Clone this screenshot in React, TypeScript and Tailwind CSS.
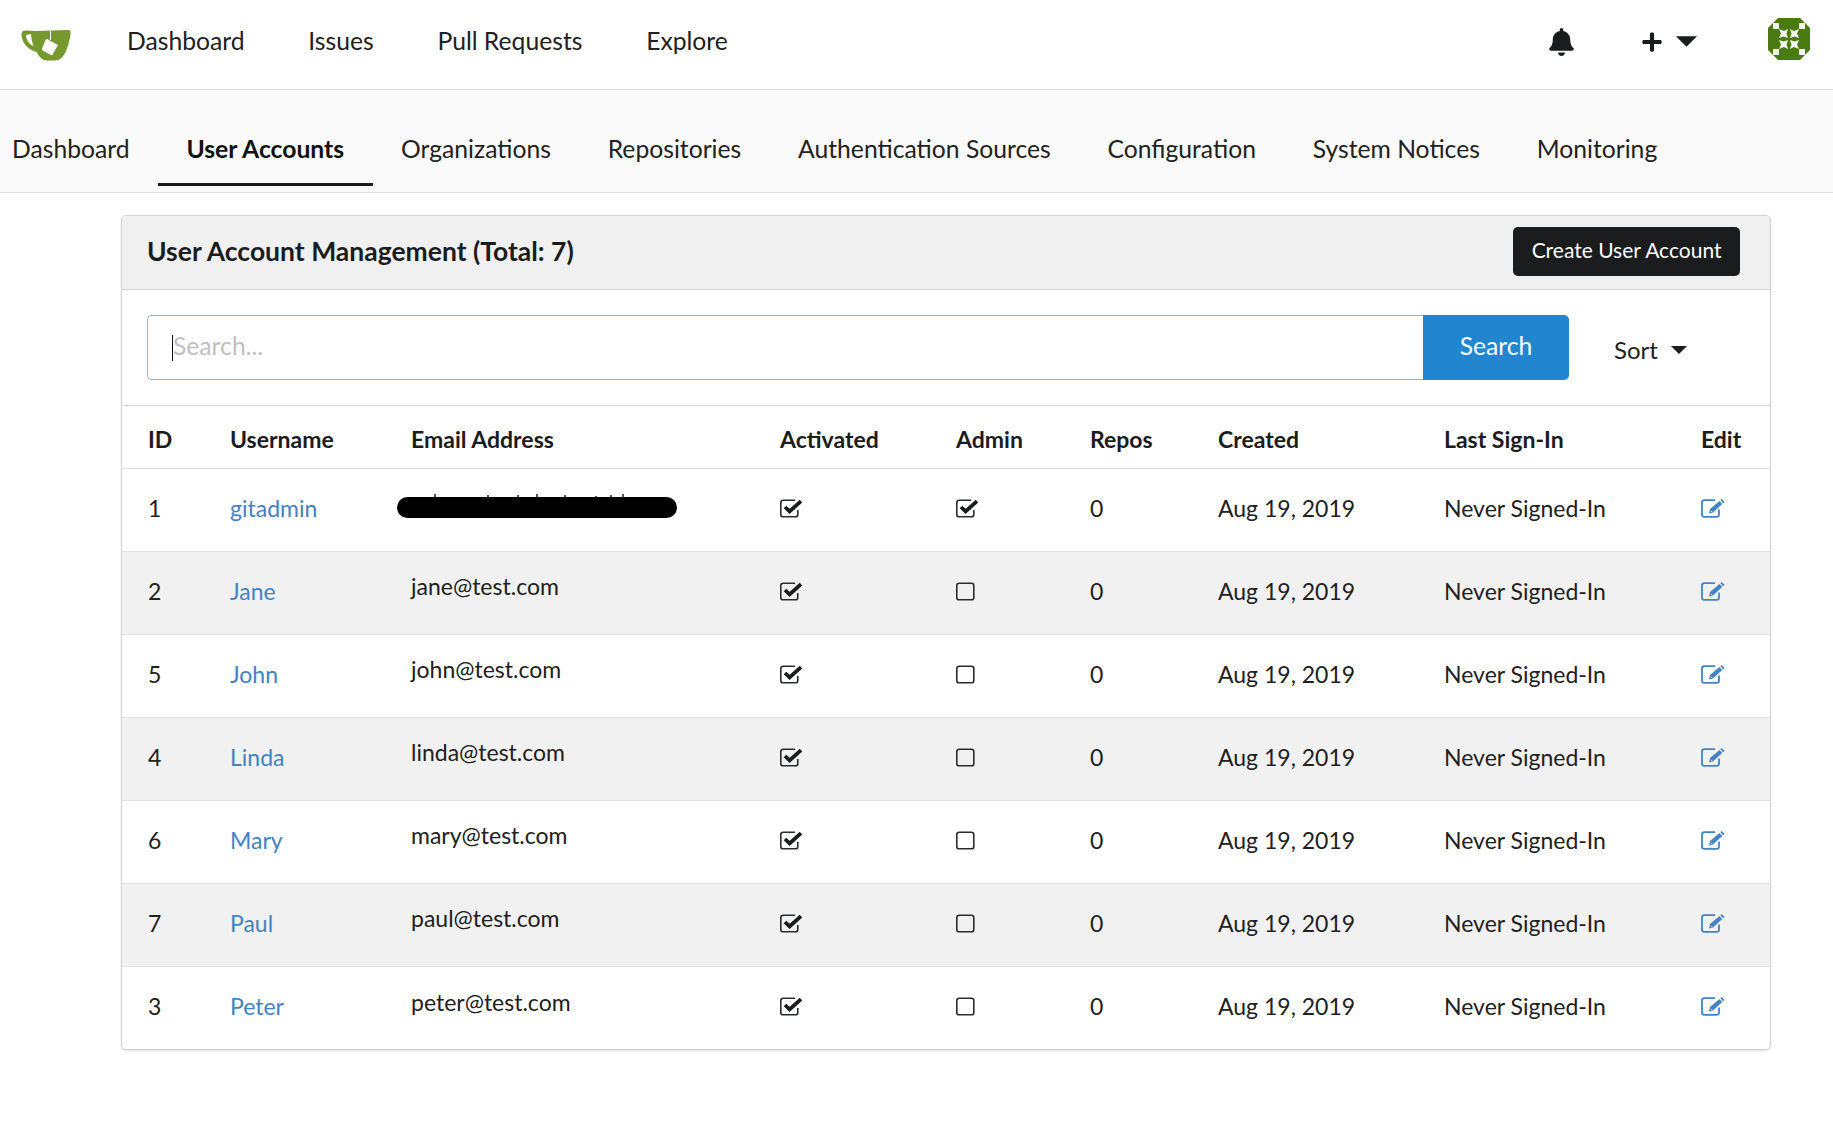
import { FaBell, FaPlus } from "react-icons/fa"

const topLinks = ["Dashboard", "Issues", "Pull Requests", "Explore"]

const tabs = [
    { title: "Dashboard", active: false },
    { title: "User Accounts", active: true },
    { title: "Organizations", active: false },
    { title: "Repositories", active: false },
    { title: "Authentication Sources", active: false },
    { title: "Configuration", active: false },
    { title: "System Notices", active: false },
    { title: "Monitoring", active: false },
]

const users = [
    { id: 1, name: "gitadmin", email: "", admin: true },
    { id: 2, name: "Jane", email: "jane@test.com", admin: false },
    { id: 5, name: "John", email: "john@test.com", admin: false },
    { id: 4, name: "Linda", email: "linda@test.com", admin: false },
    { id: 6, name: "Mary", email: "mary@test.com", admin: false },
    { id: 7, name: "Paul", email: "paul@test.com", admin: false },
    { id: 3, name: "Peter", email: "peter@test.com", admin: false },
]

const headers = [
    { title: "ID", width: "w-[82px]" },
    { title: "Username", width: "w-[181px]" },
    { title: "Email Address", width: "w-[369px]" },
    { title: "Activated", width: "w-[176px]" },
    { title: "Admin", width: "w-[134px]" },
    { title: "Repos", width: "w-[128px]" },
    { title: "Created", width: "w-[226px]" },
    { title: "Last Sign-In", width: "w-[257px]" },
    { title: "Edit", width: "w-[95px]" },
]

function Logo() {
    return (
        <svg viewBox="0 0 50 32" className="h-[32px] w-[50px]">
            <path
                d="M0.5 5 C0.5 2 3 1 6 1.5 L15 2 L47 1 C49.5 1 50 3 49.4 6 C48 14 45.5 24 41 28.5 C39 30.5 36 31.5 33 31.5 L26 31.5 C21.5 31.5 18.5 28 15.5 23 C8 21 0.5 15 0.5 5 Z"
                fill="#76992f"
            />
            <path d="M5 6 L10 5 C10.3 9 11 13 12.5 17 C8 15 5.2 11 5 6 Z" fill="#fff" />
            <path d="M29.5 1.5 L29.5 11" stroke="#fff" strokeWidth="1" />
            <path d="M26 10 L37 16 L31 26.5 L22.5 22 C21 21 20.7 20 21.5 18.5 L24.5 11 C25 10 25.5 9.8 26 10 Z" fill="#fff" />
        </svg>
    )
}

function Avatar() {
    return (
        <svg viewBox="0 0 42 42" className="h-[42px] w-[42px]">
            <path d="M10 0 H32 L42 10 V32 L32 42 H10 L0 32 V10 Z" fill="#4a7a12" />
            <rect x="5" y="5" width="6" height="6" fill="#f2f4ec" />
            <rect x="31" y="5" width="6" height="6" fill="#f2f4ec" />
            <rect x="5" y="31" width="6" height="6" fill="#f2f4ec" />
            <rect x="31" y="31" width="6" height="6" fill="#f2f4ec" />
            <path d="M11 11 L16 13 L20 11 L18.5 15.5 L20 20 L15.5 18.5 L11 20 L13 15.5 Z" fill="#f7f8f2" />
            <path d="M31 11 L26 13 L22 11 L23.5 15.5 L22 20 L26.5 18.5 L31 20 L29 15.5 Z" fill="#f7f8f2" />
            <path d="M11 31 L16 29 L20 31 L18.5 26.5 L20 22 L15.5 23.5 L11 22 L13 26.5 Z" fill="#f7f8f2" />
            <path d="M31 31 L26 29 L22 31 L23.5 26.5 L22 22 L26.5 23.5 L31 22 L29 26.5 Z" fill="#f7f8f2" />
        </svg>
    )
}

function Caret({ className }: { className: string }) {
    return (
        <svg viewBox="0 0 20 10" className={className}>
            <path d="M0 0 H20 L10 10 Z" fill="#1b1c1d" />
        </svg>
    )
}

function CheckBox({ checked }: { checked: boolean }) {
    return (
        <svg viewBox="0 0 23 19" className="block h-[19px] w-[23px]">
            <path
                d={
                    checked
                        ? "M15 1.2 H3.2 A2.4 2.4 0 0 0 0.8 3.6 V15.4 A2.4 2.4 0 0 0 3.2 17.8 H15.4 A2.4 2.4 0 0 0 17.8 15.4 V11"
                        : "M3.2 1.2 H15.4 A2.4 2.4 0 0 1 17.8 3.6 V15.4 A2.4 2.4 0 0 1 15.4 17.8 H3.2 A2.4 2.4 0 0 1 0.8 15.4 V3.6 A2.4 2.4 0 0 1 3.2 1.2 Z"
                }
                fill="none"
                stroke="#2b2c2d"
                strokeWidth="1.6"
            />
            {checked && <path d="M5 8 L9.6 12.4 L21 2.2" fill="none" stroke="#1b1c1d" strokeWidth="3.8" />}
        </svg>
    )
}

function EditIcon() {
    return (
        <svg viewBox="0 0 24 19" className="block h-[19px] w-[24px]">
            <path
                d="M14 1.2 H3.4 A2.4 2.4 0 0 0 1 3.6 V15.4 A2.4 2.4 0 0 0 3.4 17.8 H15.6 A2.4 2.4 0 0 0 18 15.4 V10.5"
                fill="none"
                stroke="#4183c4"
                strokeWidth="1.8"
            />
            <path d="M9 10 L18.5 2 L21.2 5 L12 13.6 L8 14.6 Z" fill="#4183c4" />
            <path d="M19.4 1.2 L20.6 0 L23.6 3 L22.2 4.2 Z" fill="#4183c4" />
            <path d="M10 11.8 L11.2 13" stroke="#fff" strokeWidth="1" />
        </svg>
    )
}

// blacked out address, the tops of the letters still show above the bar
function Redacted() {
    return (
        <svg viewBox="0 0 280 24" className="-ml-[14px] mt-[4px] block h-[24px] w-[280px]">
            <path d="M38 0 V6 M91 1 V6 M121 1 V6 M140 0 V6 M168 1 V6 M199 2 V6 M214 1 V6 M226 0 V6" stroke="#333" strokeWidth="1.6" />
            <rect x="0" y="3" width="280" height="21" rx="10.5" fill="#000" />
        </svg>
    )
}

export default function App() {
    return (
        <div className="min-h-[1125px] bg-white font-['Lato',sans-serif] text-[23px] text-[#212121]">
            <div className="flex h-[90px] items-center border-b border-[#dedede] pl-[21px] pr-[23px]">
                <Logo />
                <div className="-mt-[7px] ml-[56px] flex gap-[63.7px] text-[24.7px]">
                    {topLinks.map((link) => (
                        <a key={link} href="#" className="leading-[34px]">
                            {link}
                        </a>
                    ))}
                </div>
                <div className="-mt-[12px] ml-auto flex items-center">
                    <FaBell className="mt-[6px] h-[28px] w-[25px] text-[#1b1c1d]" />
                    <FaPlus className="ml-[67px] mt-[6px] h-[22px] w-[22px] text-[#1b1c1d]" />
                    <Caret className="ml-[13px] mt-[5px] h-[11px] w-[21px]" />
                    <div className="ml-[71px]">
                        <Avatar />
                    </div>
                </div>
            </div>

            <div className="flex h-[103px] border-b border-[#dedede] bg-[#fafafa] pb-[6px] text-[24.7px]">
                {tabs.map((tab) => (
                    <a
                        key={tab.title}
                        href="#"
                        className={`flex items-center border-b-[3px] px-[28.4px] pt-[24px] first:pl-[12px] ${tab.active ? "border-[#1b1c1d] font-bold text-[#111]" : "border-transparent"}`}
                    >
                        {tab.title}
                    </a>
                ))}
            </div>

            <div className="ml-[121px] mt-[22px] w-[1650px] overflow-hidden rounded-[5px] border border-[#d4d4d5] shadow-[0_1px_2px_rgba(34,36,38,0.15)]">
                <div className="flex h-[74px] items-center justify-between border-b border-[#d4d4d5] bg-[#f0f0f0] pb-[2px] pl-[25px] pr-[30px]">
                    <h4 className="text-[26.5px] font-bold text-[#1b1c1d]">User Account Management (Total: 7)</h4>
                    <button className="h-[49px] rounded-[5px] bg-[#1b1c1d] px-[18.5px] pb-[3px] text-[21px] text-white">
                        Create User Account
                    </button>
                </div>

                <div className="flex h-[116px] items-center border-b border-[#d4d4d5] pb-[1px] pl-[25px] text-[24.7px]">
                    <div className="flex h-[65px] w-[1276px] items-center rounded-l-[5px] border border-r-0 border-[#85b7d9] pb-[2px] pl-[24px] text-[#bfbfbf]">
                        <span className="h-[26px] w-px translate-y-[2px] bg-[#111]" />
                        <span className="leading-[34px]">Search...</span>
                    </div>
                    <button className="h-[65px] w-[146px] rounded-r-[5px] bg-[#2185d0] pb-[2px] text-white">Search</button>
                    <div className="ml-[45px] flex items-center gap-[13px] pt-[5px] text-[24px]">
                        <span>Sort</span>
                        <Caret className="h-[8px] w-[16px]" />
                    </div>
                </div>

                <table className="w-full table-fixed border-collapse text-left">
                    <colgroup>
                        {headers.map((h) => (
                            <col key={h.title} className={h.width} />
                        ))}
                    </colgroup>
                    <thead>
                        <tr className="h-[62px] border-b border-[#e0e0e0]">
                            {headers.map((h) => (
                                <th key={h.title} className="pl-[26px] pt-[4px] font-bold text-[#1b1c1d]">
                                    {h.title}
                                </th>
                            ))}
                        </tr>
                    </thead>
                    <tbody>
                        {users.map((u, i) => (
                            <tr
                                key={u.id}
                                className={`h-[83px] border-b border-[#e0e0e0] last:border-b-0 ${i % 2 === 1 ? "bg-[#f1f1f1]" : ""}`}
                            >
                                <td className="pb-[3px] pl-[26px]">{u.id}</td>
                                <td className="pb-[3px] pl-[26px]">
                                    <a href="#" className="text-[#4183c4]">
                                        {u.name}
                                    </a>
                                </td>
                                <td className="pb-[12px] pl-[26px]">
                                    {u.email || <Redacted />}
                                </td>
                                <td className="pb-[3px] pl-[26px]">
                                    <CheckBox checked />
                                </td>
                                <td className="pb-[3px] pl-[26px]">
                                    <CheckBox checked={u.admin} />
                                </td>
                                <td className="pb-[3px] pl-[26px]">0</td>
                                <td className="pb-[3px] pl-[26px]">Aug 19, 2019</td>
                                <td className="pb-[3px] pl-[26px]">Never Signed-In</td>
                                <td className="pb-[3px] pl-[26px]">
                                    <EditIcon />
                                </td>
                            </tr>
                        ))}
                    </tbody>
                </table>
            </div>
        </div>
    )
}
